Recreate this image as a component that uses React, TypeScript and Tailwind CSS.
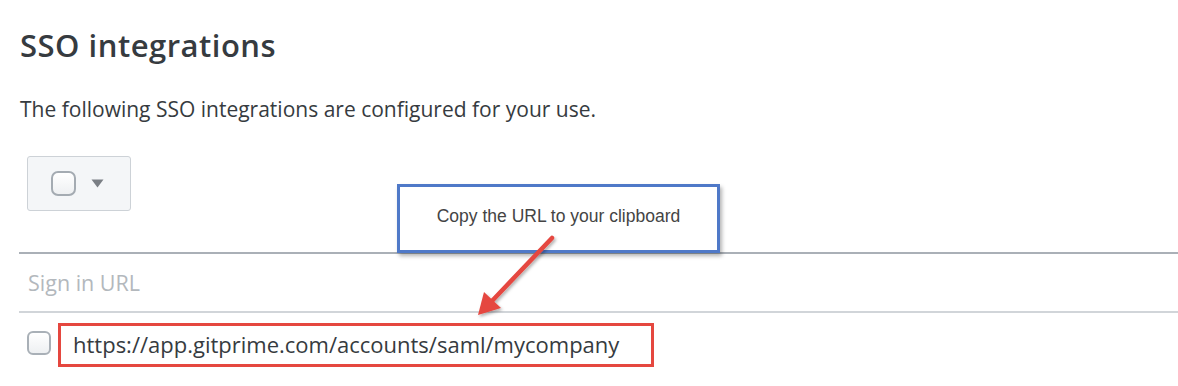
import React from "react";

export default function App() {
  return (
    <div className="relative w-[1178px] h-[386px] bg-white overflow-hidden font-['Open_Sans',sans-serif]">
      <div className="pl-5 pt-[25px]">
        <h1 className="text-[31px] leading-[40px] font-semibold tracking-[0.5px] text-[#363b40]">SSO integrations</h1>
        <p className="mt-[30px] text-[21px] leading-[28px] text-[#363b40]">
          The following SSO integrations are configured for your use.
        </p>
      </div>
      <div className="pl-[19px]">
        <div className="pl-2 mt-[33px]">
          <div className="w-[104px] h-[55px] border border-[#cdd2d7] bg-[#f4f6f8] rounded-[3px] flex items-center pl-[23px] gap-[15px]">
            <div className="w-[25px] h-[25px] rounded-[7px] border-2 border-[#a4abb2] bg-gradient-to-b from-white to-[#eef0f2]"></div>
            <svg width="13" height="9" viewBox="0 0 13 9">
              <path d="M0.5 0.5 L12.5 0.5 L6.5 8.5 Z" fill="#7a7f85" />
            </svg>
          </div>
        </div>
        <div className="mt-[41px] border-t-2 border-[#aab0b7] h-[59px] flex items-center pl-[9px]">
          <span className="text-[21.5px] leading-[29px] text-[#b3b8bd]">Sign in URL</span>
        </div>
        <div className="border-t-2 border-[#d1d5d9] flex items-start pt-[10px]">
          <div className="ml-2 mt-[8px] w-[24px] h-[24px] rounded-[6px] border-2 border-[#a9b0b7] bg-gradient-to-b from-white to-[#eef0f2]"></div>
          <div className="ml-[7px] w-[596px] h-[44px] border-[3px] border-[#e5473f] flex items-center pl-[12px] pb-[3px]">
            <span className="text-[22px] leading-[30px] text-[#363b40] whitespace-nowrap">https://app.gitprime.com/accounts/saml/mycompany</span>
          </div>
        </div>
      </div>

      <div className="absolute left-[397px] top-[184px] w-[323px] h-[69px] border-[3px] border-[#4f79c8] bg-white shadow-[2px_3px_4px_rgba(0,0,0,0.3)] flex items-center justify-center">
        <span className="font-['Liberation_Sans',sans-serif] text-[17.5px] text-[#444] -mt-[4px]">Copy the URL to your clipboard</span>
      </div>

      <svg className="absolute left-0 top-0 pointer-events-none" width="1178" height="386">
        <defs>
          <filter id="sh" x="-20%" y="-20%" width="140%" height="140%">
            <feDropShadow dx="1.5" dy="2" stdDeviation="1.5" floodColor="#000" floodOpacity="0.3" />
          </filter>
        </defs>
        <g filter="url(#sh)">
          <line x1="552" y1="238" x2="492" y2="301" stroke="#e5473f" strokeWidth="4.5" strokeLinecap="round" />
          <path d="M478 315 L484 292 L501 308 Z" fill="#e5473f" />
        </g>
      </svg>
    </div>
  );
}
